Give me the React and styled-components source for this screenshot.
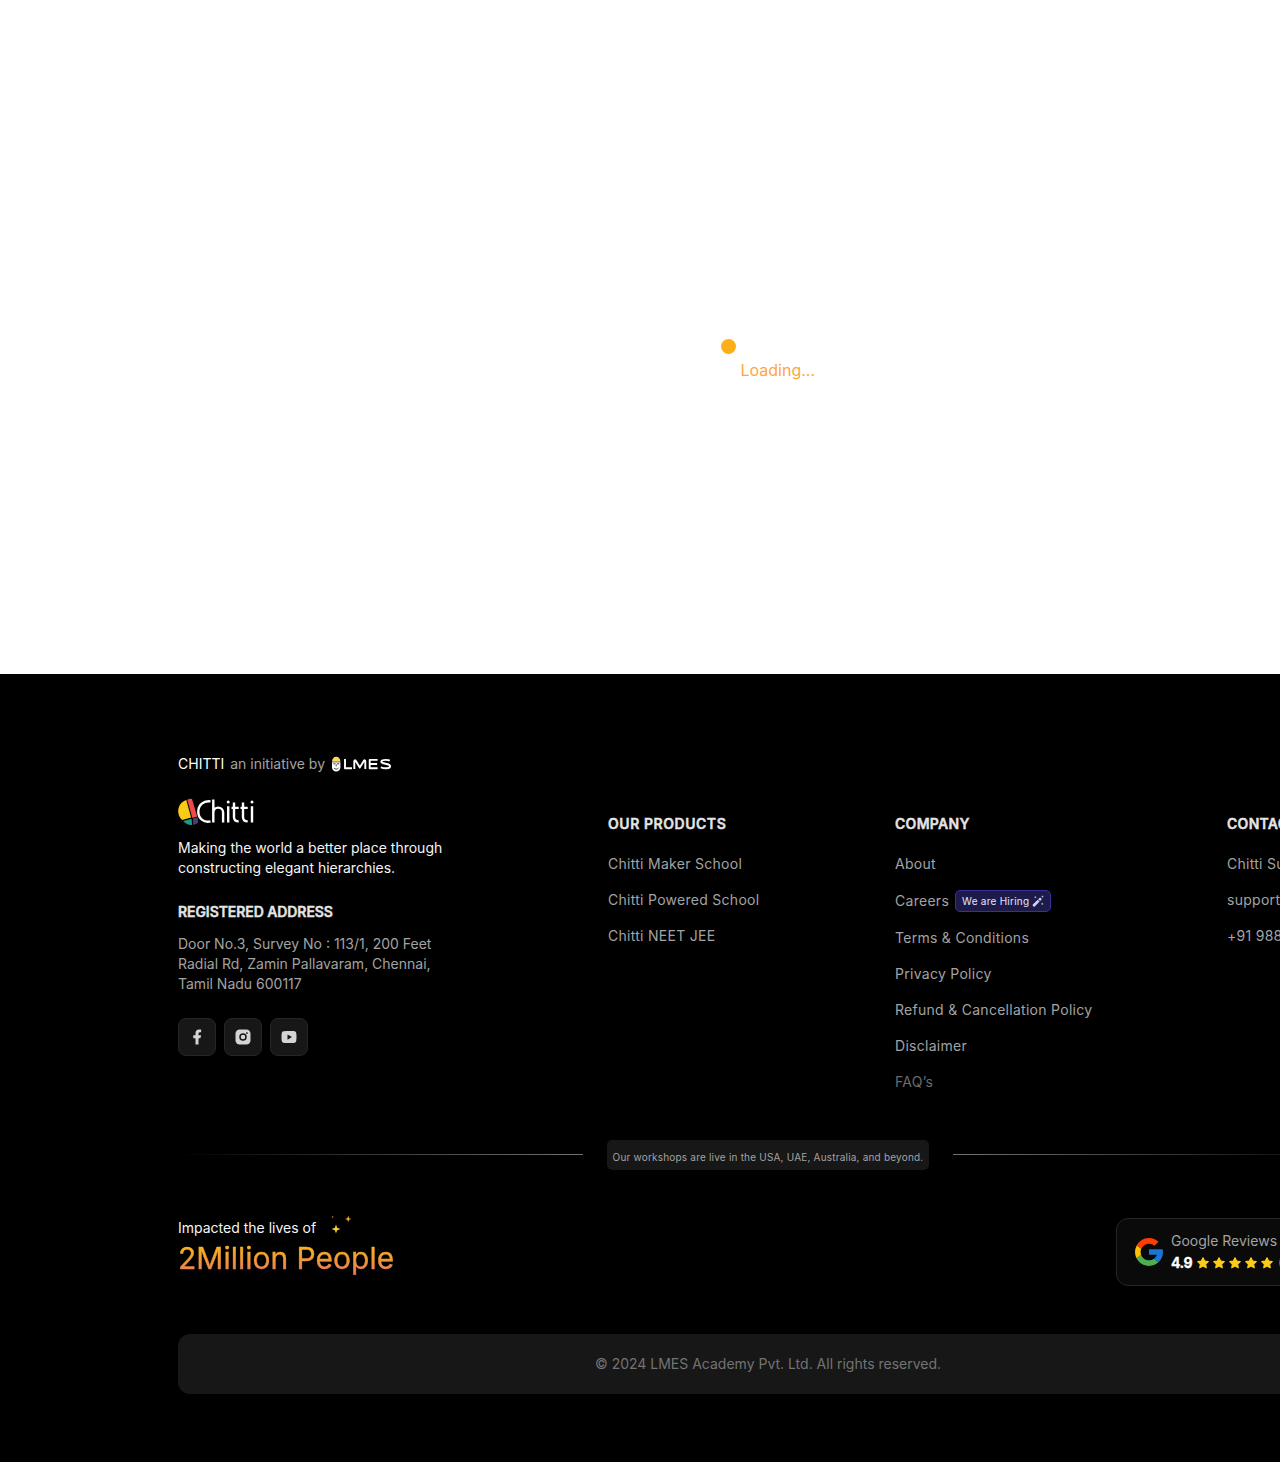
import React from "react";
import styled, { createGlobalStyle } from "styled-components";

const Global = createGlobalStyle`
  *, *::before, *::after { box-sizing: border-box; }
  html { overflow-x: hidden; }
  body {
    margin: 0;
    background: #fff;
    font-family: Inter, "Liberation Sans", Arial, sans-serif;
    font-size: 14px;
    line-height: 20px;
  }
  ul, p, h2, h3 { margin: 0; padding: 0; list-style: none; }
  a { color: inherit; text-decoration: none; }
  svg { display: block; flex: none; }
`;

const Page = styled.div`
  width: 1536px;
  min-height: 1462px;
  display: flex;
  flex-direction: column;
`;

const LoaderArea = styled.main`
  height: 674px;
  padding-top: 339px;
  display: flex;
  flex-direction: column;
  align-items: center;
`;

const Loader = styled.div`
  width: 95px;
  display: flex;
  flex-direction: column;
`;

const Dot = styled.span`
  width: 15px;
  height: 15px;
  border-radius: 50%;
  background: #fcaf17;
`;

const LoadingText = styled.p`
  margin-top: 4px;
  padding-left: 20px;
  font-size: 16px;
  line-height: 24px;
  white-space: nowrap;
  color: #ffa640;
`;

const Footer = styled.footer`
  height: 788px;
  padding: 80px 178px 68px;
  background: #000;
  color: #a3a3a3;
`;

const Initiative = styled.div`
  height: 20px;
  display: flex;
  align-items: center;
  gap: 6px;
`;

const Strong = styled.span`
  color: #fff;
`;

const Columns = styled.div`
  margin-top: 24px;
  height: 294px;
  display: flex;
  justify-content: space-between;
  align-items: flex-start;
`;

const Brand = styled.section`
  width: 295px;
`;

const Tagline = styled.p`
  margin-top: 12px;
  color: #f5f5f5;
  white-space: nowrap;
`;

const Heading = styled.h3`
  margin-top: ${(p) => p.$top || 0};
  font-size: 14px;
  font-weight: 600;
  line-height: 20px;
  letter-spacing: ${(p) => p.$tracking || "0"};
  color: #e5e5e5;
  -webkit-text-stroke: 0.4px #e5e5e5;
  white-space: nowrap;
`;

const Address = styled.p`
  margin-top: 12px;
  white-space: nowrap;
`;

const Socials = styled.div`
  margin-top: 24px;
  display: flex;
  gap: 8px;
`;

const SocialButton = styled.a`
  width: 38px;
  height: 38px;
  display: flex;
  align-items: center;
  justify-content: center;
  border: 1px solid #262626;
  border-radius: 8px;
  background: #171717;
  color: #d4d4d4;
`;

const LinkColumn = styled.section`
  width: ${(p) => p.$width};
  padding-top: 16px;
`;

const LinkList = styled.ul`
  margin-top: 20px;
  display: flex;
  flex-direction: column;
  gap: 16px;
`;

const LinkItem = styled.li`
  display: flex;
  align-items: center;
  gap: 6px;
  letter-spacing: 0.28px;
  white-space: nowrap;
  color: ${(p) => (p.$dim ? "#6b6b6b" : "#a3a3a3")};
`;

const HiringBadge = styled.span`
  height: 22px;
  padding: 0 6px;
  display: flex;
  align-items: center;
  gap: 3px;
  border: 1px solid #3730a3;
  border-radius: 5px;
  background: #1e1b4b;
  color: #e0e7ff;
  font-size: 10px;
  line-height: 20px;
  letter-spacing: 0.25px;
`;

const Divider = styled.div`
  margin-top: 48px;
  height: 30px;
  display: flex;
  gap: 24px;
`;

const Rule = styled.span`
  flex: 1;
  height: 1px;
  margin-top: 14px;
  background: linear-gradient(to ${(p) => p.$to}, #000, #737373);
`;

const Notice = styled.p`
  width: 322px;
  height: 30px;
  padding-top: 4px;
  border-radius: 5px;
  background: #171717;
  font-size: 10px;
  line-height: 26px;
  letter-spacing: 0.2px;
  text-align: center;
  white-space: nowrap;
`;

const Highlights = styled.div`
  margin-top: 44px;
  height: 72px;
  display: flex;
  justify-content: space-between;
`;

const ImpactLine = styled.div`
  display: flex;
  align-items: flex-end;
  gap: 14px;
  height: 24px;
  color: #f5f5f5;
  line-height: 20px;

  svg { margin-bottom: -1px; }
`;

const Impact = styled.p`
  width: max-content;
  font-size: 30px;
  line-height: 40px;
  background: linear-gradient(to bottom, #fcb813 15%, #e87b5a 90%);
  background-clip: text;
  -webkit-background-clip: text;
  -webkit-text-stroke: 0.4px transparent;
  color: transparent;
`;

const ReviewCard = styled.aside`
  width: 242px;
  height: 68px;
  margin-top: 4px;
  padding: 0 17px;
  display: flex;
  align-items: center;
  gap: 7px;
  border: 1px solid #262626;
  border-radius: 12px;
  background: #0a0a0a;
`;

const Rating = styled.div`
  display: flex;
  align-items: center;
  gap: 2px;
  height: 20px;
  margin-top: 2px;
  color: #60a5fa;
  white-space: nowrap;
`;

const Score = styled.strong`
  width: 23px;
  font-weight: 700;
  letter-spacing: -0.5px;
  color: #fff;
  -webkit-text-stroke: 0.3px #fff;
`;

const ReviewCount = styled.span`
  margin-left: 2px;
`;

const Copyright = styled.div`
  margin-top: 48px;
  height: 60px;
  display: flex;
  align-items: center;
  justify-content: center;
  border-radius: 12px;
  background: #171717;
  color: #737373;
`;

const LmesLogo = () => (
  <svg width="61" height="16" viewBox="0 0 61 16" fill="none">
    <path d="M1 5.800C1 2.800 2.700.8 5.200.8s4.200 2 4.200 5z" fill="#f9dc5c" />
    <path d="M1 6.300h8.400v5c0 2.500-1.800 4.200-4.200 4.200S1 13.800 1 11.300z" fill="#fff" />
    <path d="M2.300 7.800h2.200M6 7.800h2.200M5.200 8.300v2M2.900 12c1 1.500 3.600 1.500 4.600 0" stroke="#111" strokeWidth=".8" />
    <g stroke="#fff" strokeWidth="1.900" strokeLinejoin="round">
      <path d="M14 3v9.300h7" />
      <path d="M23.300 13V5.200c0-1 .8-1.300 1.400-.4l4.100 6.600 4.100-6.600c.6-.9 1.400-.6 1.400.4V13" />
      <path d="M46.600 3.900h-7.900v8.400h7.900M38.700 8h7.400" />
      <path d="M58.800 4.600c-1.200-.7-7.500-1.400-8.400.7-.9 3.100 8.700 1.800 8.700 4.900 0 2.700-6.600 2.500-9.200 1" />
    </g>
  </svg>
);

const ChittiLogo = () => (
  <svg width="77" height="28" viewBox="0 0 77 28" fill="none">
    <path d="M8.300 2C3.300 3.500.2 8 .2 13.300c0 3.500 1.400 6.500 4 8.800l8.900-2.500z" fill="#f9ca16" />
    <path d="M9.200 1.700C11 .7 12.700.5 14 1l5.200 17.600-4.800 1.500z" fill="#ee4a47" />
    <path d="M5.300 23.100l8.300-2.400.5 6.300c-3.500.3-6.500-1.100-8.800-3.900z" fill="#159a8c" />
    <path d="M15 20.600l4.700-1.300.3 5.200c-1.300 1.300-3 2.100-4.900 2.400z" fill="#44406f" />
    <g stroke="#fff" strokeWidth="2.400">
      <path d="M32.500 3.400c-6.800-1.100-12.200 3.700-12.200 10.300S25.700 25 32.500 23.400" />
      <path d="M35.300 1.500v23M35.300 17v-2.500c0-6.500 9.800-6.500 9.800 0v10" />
      <path d="M50.200 8.300v16.200M74 8.300v16.200" />
      <path d="M56 4.500V19c0 3.300 1.800 4.400 4.700 4.400M53.500 9.900h7.200" />
      <path d="M65 4.500V19c0 3.300 1.800 4.400 4.700 4.400M62.500 9.900h7.200" />
    </g>
    <circle cx="50.200" cy="4" r="1.500" fill="#fff" />
    <circle cx="74" cy="4" r="1.500" fill="#fff" />
  </svg>
);

const FacebookIcon = () => (
  <svg width="18" height="18" viewBox="0 0 24 24" fill="currentColor">
    <path d="M14 13.500h2.500l1-4H14v-2c0-1.030 0-2 2-2h1.500V2.140c-.326-.043-1.557-.14-2.857-.14C11.928 2 10 3.657 10 6.700v2.800H7v4h3V22h4v-8.500z" />
  </svg>
);

const InstagramIcon = () => (
  <svg width="18" height="18" viewBox="0 0 24 24">
    <rect x="2" y="2" width="20" height="20" rx="5.500" fill="currentColor" />
    <circle cx="12" cy="12" r="4" fill="none" stroke="#171717" strokeWidth="2" />
    <circle cx="17.250" cy="6.750" r="1.250" fill="#171717" />
  </svg>
);

const YoutubeIcon = () => (
  <svg width="18" height="18" viewBox="0 0 24 24" fill="currentColor">
    <path fillRule="evenodd" d="M12.244 4c.534.003 1.870.016 3.290.073l.504.022c1.429.067 2.857.183 3.566.380.945.266 1.687 1.040 1.938 2.022.4 1.560.45 4.602.456 5.339v.328c-.006.737-.056 3.780-.456 5.339-.254.985-.997 1.760-1.938 2.022-.709.197-2.137.313-3.566.380l-.504.023c-1.420.056-2.756.070-3.290.072h-.488c-1.130-.006-5.854-.057-7.356-.475-.944-.266-1.687-1.040-1.938-2.022-.4-1.560-.45-4.602-.456-5.339v-.328c.006-.737.056-3.780.456-5.339.254-.985.997-1.760 1.938-2.022C5.902 4.057 10.626 4.006 11.756 4zM10 8.500v7l6-3.500z" />
  </svg>
);

const WandIcon = () => (
  <svg width="12" height="12" viewBox="0 0 12 12" fill="#c7d2fe">
    <path d="M.8 9.400l4.900-4.700 1.900 1.900-4.800 4.800c-1.100.9-2.900-.9-2-2z" />
    <path d="M6.200 4.200l1.300-1.200c1.100-.9 2.700.8 1.800 1.800L8.100 6.100z" />
    <path d="M3.300.9l.4.900.9.400-.9.400-.4.900-.4-.9-.9-.4.900-.4zM10.500.3l.4.900.9.400-.9.400-.4.900-.4-.9-.9-.4.900-.4zM10.200 7.600l.4.900.9.400-.9.400-.4.900-.4-.9-.9-.4.900-.4z" />
  </svg>
);

const Sparkles = () => (
  <svg width="24" height="24" viewBox="0 0 24 24">
    <path d="M6 9.500l1.100 3.300 3.400 1.200-3.400 1.200L6 18.500l-1.100-3.300L1.500 14l3.400-1.200z" fill="#fbcf35" />
    <path d="M18.200.8l.8 2.400 2.400.8-2.400.8-.8 2.400-.8-2.400L15 4l2.400-.8z" fill="#f9b52b" />
    <circle cx="2.600" cy="2" r=".7" fill="#e99b32" />
  </svg>
);

const GoogleIcon = () => (
  <svg width="30" height="30" viewBox="2.500 2.500 43 43">
    <path fill="#1976D2" d="M43.611 20.083H42V20H24v8h11.303a12.040 12.040 0 0 1-4.087 5.571l6.190 5.238C36.971 39.205 44 34 44 24c0-1.341-.138-2.650-.389-3.917z" />
    <path fill="#FF3D00" d="M6.306 14.691l6.571 4.819C14.655 15.108 18.961 12 24 12c3.059 0 5.842 1.154 7.961 3.039l5.657-5.657C34.046 6.053 29.268 4 24 4 16.318 4 9.656 8.337 6.306 14.691z" />
    <path fill="#4CAF50" d="M24 44c5.166 0 9.860-1.977 13.409-5.192l-6.190-5.238A11.910 11.910 0 0 1 24 36c-5.202 0-9.619-3.317-11.283-7.946l-6.522 5.025C9.505 39.556 16.227 44 24 44z" />
    <path fill="#FFC107" d="M6.306 14.691A19.900 19.900 0 0 0 4 24c0 3.260.79 6.330 2.195 9.079l6.522-5.025A12.100 12.100 0 0 1 12 24c0-1.580.31-3.100.877-4.490z" />
  </svg>
);

const Star = () => (
  <svg width="14" height="14" viewBox="0 0 24 24" fill="#facc15" stroke="#facc15" strokeWidth="2" strokeLinejoin="round">
    <path d="M12 3l2.800 5.700 6.200.9-4.500 4.400 1.100 6.200-5.600-2.900-5.600 2.900L7.500 14 3 9.600l6.200-.9z" />
  </svg>
);

const products = ["Chitti Maker School", "Chitti Powered School", "Chitti NEET JEE"];
const company = [
  { label: "About" },
  { label: "Careers", hiring: true },
  { label: "Terms & Conditions" },
  { label: "Privacy Policy" },
  { label: "Refund & Cancellation Policy" },
  { label: "Disclaimer" },
  { label: "FAQ’s", dim: true },
];
const contact = ["Chitti Support", "support@chitti.app", "+91 988"];

export default function App() {
  return (
    <>
      <Global />
      <Page>
        <LoaderArea>
          <Loader>
            <Dot />
            <LoadingText>Loading...</LoadingText>
          </Loader>
        </LoaderArea>
        <Footer>
          <Initiative>
            <Strong>CHITTI</Strong>
            <span>an initiative by</span>
            <LmesLogo />
          </Initiative>
          <Columns>
            <Brand>
              <ChittiLogo />
              <Tagline>
                Making the world a better place through
                <br />
                constructing elegant hierarchies.
              </Tagline>
              <Heading $top="24px" $tracking="-0.08px">REGISTERED ADDRESS</Heading>
              <Address>
                Door No.3, Survey No : 113/1, 200 Feet
                <br />
                Radial Rd, Zamin Pallavaram, Chennai,
                <br />
                Tamil Nadu 600117
              </Address>
              <Socials>
                <SocialButton href="#" aria-label="Facebook"><FacebookIcon /></SocialButton>
                <SocialButton href="#" aria-label="Instagram"><InstagramIcon /></SocialButton>
                <SocialButton href="#" aria-label="YouTube"><YoutubeIcon /></SocialButton>
              </Socials>
            </Brand>
            <LinkColumn $width="152px">
              <Heading $tracking="0.55px">OUR PRODUCTS</Heading>
              <LinkList>
                {products.map((label) => (
                  <LinkItem key={label}><a href="#">{label}</a></LinkItem>
                ))}
              </LinkList>
            </LinkColumn>
            <LinkColumn $width="197px">
              <Heading $tracking="0.28px">COMPANY</Heading>
              <LinkList>
                {company.map(({ label, hiring, dim }) => (
                  <LinkItem key={label} $dim={dim}>
                    <a href="#">{label}</a>
                    {hiring && <HiringBadge>We are Hiring <WandIcon /></HiringBadge>}
                  </LinkItem>
                ))}
              </LinkList>
            </LinkColumn>
            <LinkColumn $width="131px">
              <Heading $tracking="0.28px">CONTACT US</Heading>
              <LinkList>
                {contact.map((label) => (
                  <LinkItem key={label}><a href="#">{label}</a></LinkItem>
                ))}
              </LinkList>
            </LinkColumn>
          </Columns>
          <Divider>
            <Rule $to="right" />
            <Notice>Our workshops are live in the USA, UAE, Australia, and beyond.</Notice>
            <Rule $to="left" />
          </Divider>
          <Highlights>
            <div>
              <ImpactLine>
                <span>Impacted the lives of</span>
                <Sparkles />
              </ImpactLine>
              <Impact>2Million People</Impact>
            </div>
            <ReviewCard>
              <GoogleIcon />
              <div>
                <div>Google Reviews</div>
                <Rating>
                  <Score>4.9</Score>
                  {[1, 2, 3, 4, 5].map((n) => <Star key={n} />)}
                  <ReviewCount>(500)</ReviewCount>
                </Rating>
              </div>
            </ReviewCard>
          </Highlights>
          <Copyright>© 2024 LMES Academy Pvt. Ltd. All rights reserved.</Copyright>
        </Footer>
      </Page>
    </>
  );
}
